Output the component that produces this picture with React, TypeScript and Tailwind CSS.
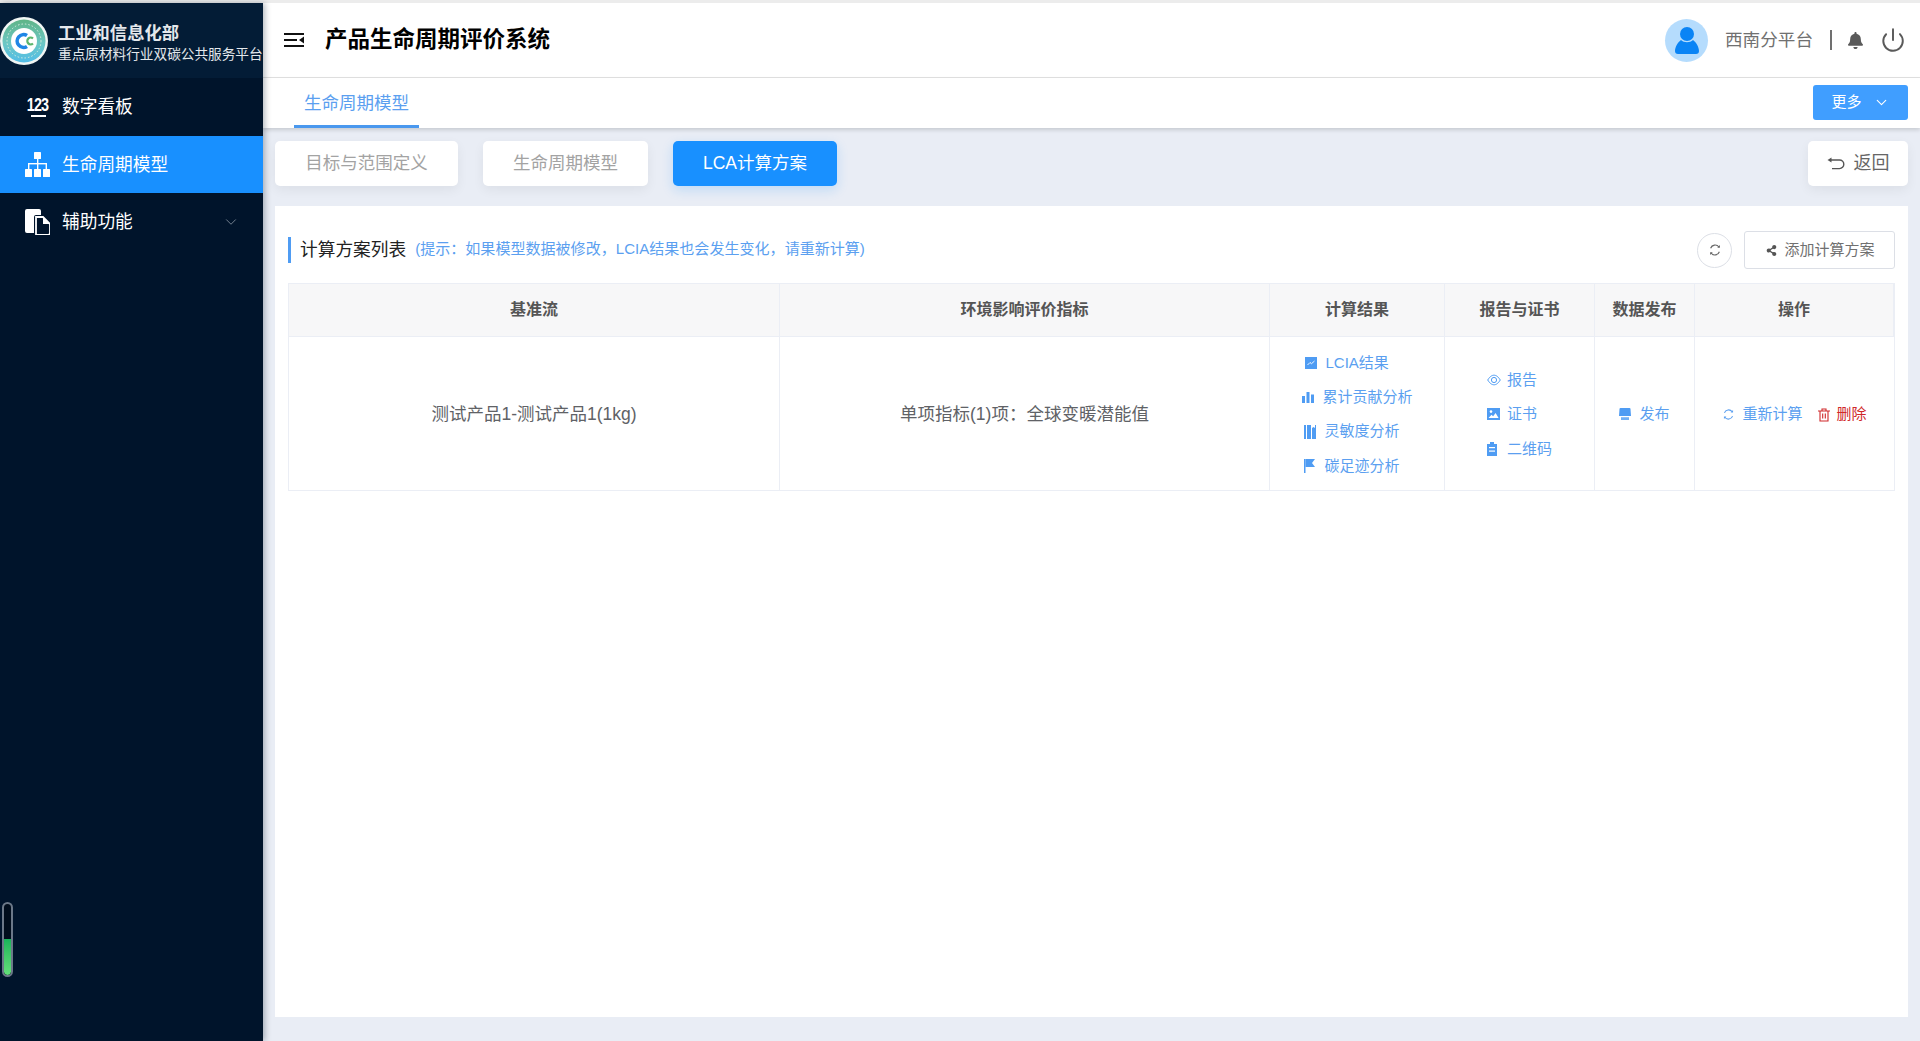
import React from "react";
import { FaBell, FaShareAlt } from "react-icons/fa";
import { LuChevronDown, LuPower } from "react-icons/lu";

const font = { fontFamily: '"Liberation Sans", "Noto Sans CJK SC", sans-serif' };

const LogoMark = () => (
  <svg viewBox="0 0 48 48" className="w-[48px] h-[48px]">
    <defs>
      <linearGradient id="ring" x1="0" y1="0" x2="0" y2="1">
        <stop offset="0" stopColor="#5fb486" />
        <stop offset="0.55" stopColor="#6cc7c4" />
        <stop offset="1" stopColor="#52bde8" />
      </linearGradient>
    </defs>
    <circle cx="24" cy="24" r="24" fill="#f1f6f4" />
    <circle cx="24" cy="24" r="21.5" fill="url(#ring)" />
    <circle cx="24" cy="24" r="17" fill="none" stroke="#d8eee0" strokeWidth="1" strokeDasharray="1.5 2" />
    <circle cx="24" cy="24" r="13" fill="#ffffff" />
    <path d="M27 18.6a6.4 6.4 0 1 0 0 10.8" fill="none" stroke="#1f86e6" strokeWidth="3.6" />
    <path d="M33 21.5a3.4 3.4 0 1 0 0 5" fill="none" stroke="#5cb56c" strokeWidth="2.2" />
  </svg>
);

const SitemapIcon = () => (
  <svg viewBox="0 0 25 25" className="w-[25px] h-[25px]" fill="#fff">
    <rect x="9" y="0" width="7" height="7" rx="0.6" />
    <rect x="12" y="7" width="1.4" height="4" />
    <rect x="3" y="11" width="19" height="1.4" />
    <rect x="3" y="11" width="1.4" height="6" />
    <rect x="12" y="11" width="1.4" height="6" />
    <rect x="20.6" y="11" width="1.4" height="6" />
    <rect x="0" y="17" width="7" height="8" rx="0.6" />
    <rect x="9" y="17" width="7" height="8" rx="0.6" />
    <rect x="18" y="17" width="7" height="8" rx="0.6" />
  </svg>
);

const FileIcon = () => (
  <svg viewBox="0 0 25 26" className="w-[25px] h-[26px]" fill="#fff">
    <path d="M2 0h12a2 2 0 0 1 2 2v4h-5a2 2 0 0 0-2 2v16H2a2 2 0 0 1-2-2V2a2 2 0 0 1 2-2z" />
    <path d="M11 8h7l7 7v9a2 2 0 0 1-2 2H11z" fill="none" stroke="#fff" strokeWidth="1.8" />
    <path d="M18 8v7h7z" />
  </svg>
);

const MenuToggle = () => (
  <svg viewBox="0 0 20 14" className="w-[20px] h-[14px]" fill="#111">
    <rect x="0" y="0" width="20" height="2" />
    <rect x="0" y="6" width="13" height="2" />
    <rect x="0" y="12" width="20" height="2" />
    <path d="M20 3.5v7L15 7z" />
  </svg>
);

const Avatar = () => (
  <div className="w-[43px] h-[43px] rounded-full bg-[#b5dcfd] flex items-center justify-center">
    <svg viewBox="0 0 26 28" className="w-[26px] h-[28px]" fill="#0a84f5">
      <circle cx="13" cy="8" r="7" />
      <path d="M7 14c-3 2-6 7-6 11 0 2 1 3 3 3h18c2 0 3-1 3-3 0-4-3-9-6-11-3 3-9 3-12 0z" />
    </svg>
  </div>
);

const ReturnIcon = () => (
  <svg viewBox="0 0 18 14" className="w-[18px] h-[14px]" fill="none" stroke="#555" strokeWidth="1.4">
    <path d="M3 3h9.5a4.2 4.2 0 0 1 0 8.6H5" />
    <path d="M0.5 3l4-2.6v5.2z" fill="#555" stroke="none" />
  </svg>
);

const RefreshIcon = ({ color, size }: { color: string; size: number }) => (
  <svg viewBox="0 0 16 16" width={size} height={size} fill="none" stroke={color} strokeWidth="1.3">
    <path d="M3 6a5.4 5.4 0 0 1 9.5-1.4" />
    <path d="M13 10a5.4 5.4 0 0 1-9.5 1.4" />
    <path d="M13.6 2.4v3h-3z" fill={color} stroke="none" />
    <path d="M2.4 13.6v-3h3z" fill={color} stroke="none" />
  </svg>
);

const blue = "#4f9cf3";

const IconChart = () => (
  <svg viewBox="0 0 12 12" className="w-[12px] h-[12px]">
    <rect width="12" height="12" fill={blue} />
    <path d="M2.5 8l2.5-2.5 1.5 1.2L9.5 4" stroke="#fff" strokeWidth="0.9" fill="none" />
  </svg>
);
const IconBars = () => (
  <svg viewBox="0 0 12 12" className="w-[12px] h-[12px]" fill={blue}>
    <rect x="0" y="5" width="3" height="7" />
    <rect x="4.5" y="1" width="3" height="11" />
    <rect x="9" y="3.5" width="3" height="8.5" />
  </svg>
);
const IconBook = () => (
  <svg viewBox="0 0 12 14" className="w-[12px] h-[14px]" fill={blue}>
    <rect x="0" y="0" width="2" height="14" />
    <path d="M3 0h4v14H3z" />
    <path d="M8 0v3l1.5-1L11 3V0h1v14H8z" />
  </svg>
);
const IconFlag = () => (
  <svg viewBox="0 0 11 14" className="w-[11px] h-[14px]" fill={blue}>
    <rect x="0" y="0" width="1.5" height="14" />
    <path d="M1.5 0H11L8 4l3 4H1.5z" />
  </svg>
);
const IconEye = () => (
  <svg viewBox="0 0 14 12" className="w-[14px] h-[12px]" fill="none" stroke={blue} strokeWidth="1">
    <path d="M0.7 6C3 2.4 5 1.2 7 1.2S11 2.4 13.3 6C11 9.6 9 10.8 7 10.8S3 9.6 0.7 6z" />
    <circle cx="7" cy="6" r="2.6" />
  </svg>
);
const IconPicture = () => (
  <svg viewBox="0 0 13 12" className="w-[13px] h-[12px]">
    <rect width="13" height="12" fill={blue} />
    <circle cx="4" cy="3.6" r="1.3" fill="#fff" />
    <path d="M1.5 10l3-3.2 1.6 1.4L8.6 5l3 5z" fill="#fff" />
  </svg>
);
const IconClipboard = () => (
  <svg viewBox="0 0 10 14" className="w-[10px] h-[14px]">
    <path d="M0 2h3V0h4v2h3v12H0z" fill={blue} />
    <rect x="2" y="5" width="6" height="1.2" fill="#fff" />
    <rect x="2" y="8.5" width="6" height="1.2" fill="#fff" />
  </svg>
);
const IconPublish = () => (
  <svg viewBox="0 0 12 12" className="w-[12px] h-[12px]" fill={blue}>
    <path d="M1.5 0h9a1 1 0 0 1 1 1l.5 7H0l.5-7a1 1 0 0 1 1-1z" />
    <path d="M2 9.2h8V12H2z" opacity="0.8" />
  </svg>
);
const IconTrash = () => (
  <svg viewBox="0 0 12 14" className="w-[12px] h-[14px]" fill="none" stroke="#d0282a" strokeWidth="1.1">
    <path d="M0 3h12M4 3V1h4v2M2 3v10h8V3M4.7 5.5v5M7.3 5.5v5" />
  </svg>
);

const NavItem = ({
  icon,
  label,
  active,
  arrow,
}: {
  icon: React.ReactNode;
  label: string;
  active?: boolean;
  arrow?: boolean;
}) => (
  <div
    className={`h-[57.5px] flex items-center text-white text-[17.7px] ${
      active ? "bg-[#1890ff]" : ""
    }`}
  >
    <div className="w-[62px] pl-[25px] flex items-center">{icon}</div>
    <span className="pt-[2px]">{label}</span>
    {arrow && <LuChevronDown className="ml-auto mr-[23px] text-[#7f8b99]" size={18} strokeWidth={1.2} />}
  </div>
);

const StepButton = ({ label, active, width }: { label: string; active?: boolean; width: string }) => (
  <div
    className={`h-[45px] rounded-[5px] flex items-center justify-center text-[17.5px] ${width} ${
      active
        ? "bg-[#1890ff] text-white shadow-[0_4px_12px_rgba(24,144,255,0.2)]"
        : "bg-white text-[#a3a3a3] shadow-[0_4px_12px_rgba(0,0,0,0.06)]"
    }`}
  >
    {label}
  </div>
);

const LinkRow = ({ icon, label, indent = "" }: { icon: React.ReactNode; label: string; indent?: string }) => (
  <div className={`h-[34.4px] flex items-center text-[15px] text-[#5b9ff0] ${indent}`}>
    <span className="w-[20px] flex items-center">{icon}</span>
    <span>{label}</span>
  </div>
);

const headers = ["基准流", "环境影响评价指标", "计算结果", "报告与证书", "数据发布", "操作"];

export default function App() {
  return (
    <div className="h-screen w-full flex flex-col overflow-hidden bg-[#e9edf5]" style={font}>
      <div className="h-[3px] bg-[#ececec] shrink-0" />
      <div className="flex flex-1 min-h-0">
        {/* Sidebar */}
        <aside className="w-[263px] shrink-0 bg-[#00142b] flex flex-col shadow-[2px_0_6px_rgba(0,21,41,0.3)] z-10">
          <div className="h-[75px] bg-[#031c36] flex items-center">
            <LogoMark />
            <div className="ml-[10px] pt-[5px] text-[#e4e8ec] whitespace-nowrap">
              <div className="text-[17.3px] font-bold leading-[24px]">工业和信息化部</div>
              <div className="text-[13.65px] leading-[20px]">重点原材料行业双碳公共服务平台</div>
            </div>
          </div>
          <NavItem
            label="数字看板"
            icon={
              <span className="flex flex-col items-center w-[22px] ml-[2px] text-white">
                <span className="text-[18px] font-bold leading-[16px] tracking-[-1px] scale-x-80">123</span>
                <span className="w-[15px] h-[2px] bg-white mt-[2px]" />
              </span>
            }
          />
          <NavItem label="生命周期模型" active icon={<SitemapIcon />} />
          <NavItem label="辅助功能" arrow icon={<FileIcon />} />
          <div className="mt-auto mb-[64px] ml-[2px] w-[11px] h-[75px] rounded-full border-2 border-[#6b7888] bg-[#000d1c] flex flex-col justify-end overflow-hidden">
            <div className="h-[36px] rounded-b-full bg-gradient-to-b from-[#16b45a] to-[#62e07a]" />
          </div>
        </aside>

        {/* Main */}
        <main className="flex-1 min-w-0 flex flex-col">
          <header className="h-[75px] shrink-0 bg-white border-b border-[#e2e2e2] flex items-center pl-[21px] pr-[14px]">
            <MenuToggle />
            <h1 className="ml-[21px] text-[22.5px] font-bold text-black">产品生命周期评价系统</h1>
            <div className="ml-auto flex items-center">
              <Avatar />
              <span className="ml-[17px] text-[17.6px] text-[#707070]">西南分平台</span>
              <span className="ml-[17px] w-[2px] h-[20px] bg-[#707070]" />
              <FaBell className="ml-[15px] text-[#5a5a5a]" size={17} />
              <LuPower className="ml-[16px] text-[#5a5a5a]" size={26} strokeWidth={1.8} />
            </div>
          </header>

          <div className="h-[50px] shrink-0 bg-white flex items-end pl-[31px] pr-[12px] shadow-[0_2px_4px_rgba(0,0,0,0.15)] z-[1]">
            <div className="h-full px-[10px] pt-[3px] border-b-[3px] border-[#4a98ee] text-[#5b9ff0] text-[17.5px] flex items-center">
              生命周期模型
            </div>
            <div className="ml-auto self-start mt-[7px] w-[95px] h-[35px] rounded-[3px] bg-[#409eff] text-white text-[15px] flex items-center justify-center gap-[11px]">
              更多
              <LuChevronDown size={17} strokeWidth={1.6} />
            </div>
          </div>

          <div className="flex-1 min-h-0 pl-[12px] pr-[12px] pt-[13px] pb-[24px] flex flex-col gap-[20px]">
            <div className="flex items-center gap-[25px] shrink-0">
              <StepButton label="目标与范围定义" width="w-[183px]" />
              <StepButton label="生命周期模型" width="w-[165px]" />
              <StepButton label="LCA计算方案" active width="w-[164px]" />
              <div className="ml-auto w-[100px] h-[45px] rounded-[5px] bg-white text-[#666] text-[18px] flex items-center justify-center gap-[9px] shadow-[0_4px_12px_rgba(0,0,0,0.06)]">
                <ReturnIcon />
                返回
              </div>
            </div>

            <section className="flex-1 min-h-0 bg-white px-[13px] pt-[25px]">
              <div className="h-[38px] flex items-center">
                <div className="w-[3px] h-[26px] bg-[#4f9cf3]" />
                <span className="ml-[9px] text-[17.7px] text-[#222]">计算方案列表</span>
                <span className="ml-[9px] text-[15.05px] text-[#5b9ff0] mt-[-2px]">
                  (提示：如果模型数据被修改，LCIA结果也会发生变化，请重新计算)
                </span>
                <div className="ml-auto mr-[-2px] w-[35px] h-[35px] rounded-full border border-[#dcdfe6] flex items-center justify-center">
                  <RefreshIcon color="#666" size={14} />
                </div>
                <div className="ml-[14px] w-[151px] h-[38px] rounded-[3px] border border-[#dcdfe6] text-[15px] text-[#707070] flex items-center justify-center gap-[7px] pl-[2px]">
                  <FaShareAlt size={11} className="text-[#555]" />
                  添加计算方案
                </div>
              </div>

              <div className="mt-[14px] border border-[#ebeef5] grid grid-cols-[491px_490px_175px_150px_100px_1fr] text-[#606266]">
                {headers.map((h) => (
                  <div
                    key={h}
                    className="h-[53px] bg-[#f7f7f8] border-b border-r last:border-r-0 border-[#ebeef5] flex items-center justify-center text-[16px] font-bold text-[#555]"
                  >
                    {h}
                  </div>
                ))}
                <div className="h-[153px] pt-[2px] border-r border-[#ebeef5] flex items-center justify-center text-[17.5px]">
                  测试产品1-测试产品1(1kg)
                </div>
                <div className="pt-[2px] border-r border-[#ebeef5] flex items-center justify-center text-[17.5px]">
                  单项指标(1)项：全球变暖潜能值
                </div>
                <div className="pt-[2px] border-r border-[#ebeef5] flex flex-col items-center justify-center">
                  <div className="ml-[1px]">
                    <LinkRow icon={<IconChart />} label="LCIA结果" indent="ml-[3px]" />
                    <LinkRow icon={<IconBars />} label="累计贡献分析" />
                    <LinkRow icon={<IconBook />} label="灵敏度分析" indent="ml-[2px]" />
                    <LinkRow icon={<IconFlag />} label="碳足迹分析" indent="ml-[2px]" />
                  </div>
                </div>
                <div className="pt-[2px] border-r border-[#ebeef5] flex flex-col items-center justify-center">
                  <div>
                    <LinkRow icon={<IconEye />} label="报告" />
                    <LinkRow icon={<IconPicture />} label="证书" />
                    <LinkRow icon={<IconClipboard />} label="二维码" />
                  </div>
                </div>
                <div className="pt-[2px] border-r border-[#ebeef5] flex flex-col items-center justify-center">
                  <LinkRow icon={<IconPublish />} label="发布" />
                </div>
                <div className="pt-[2px] flex items-center justify-center gap-[15px] text-[15px]">
                  <div className="flex items-center gap-[7px] text-[#5b9ff0]">
                    <RefreshIcon color="#5b9ff0" size={13} />
                    重新计算
                  </div>
                  <div className="flex items-center gap-[7px] text-[#d0282a]">
                    <IconTrash />
                    删除
                  </div>
                </div>
              </div>
            </section>
          </div>
        </main>
      </div>
    </div>
  );
}
